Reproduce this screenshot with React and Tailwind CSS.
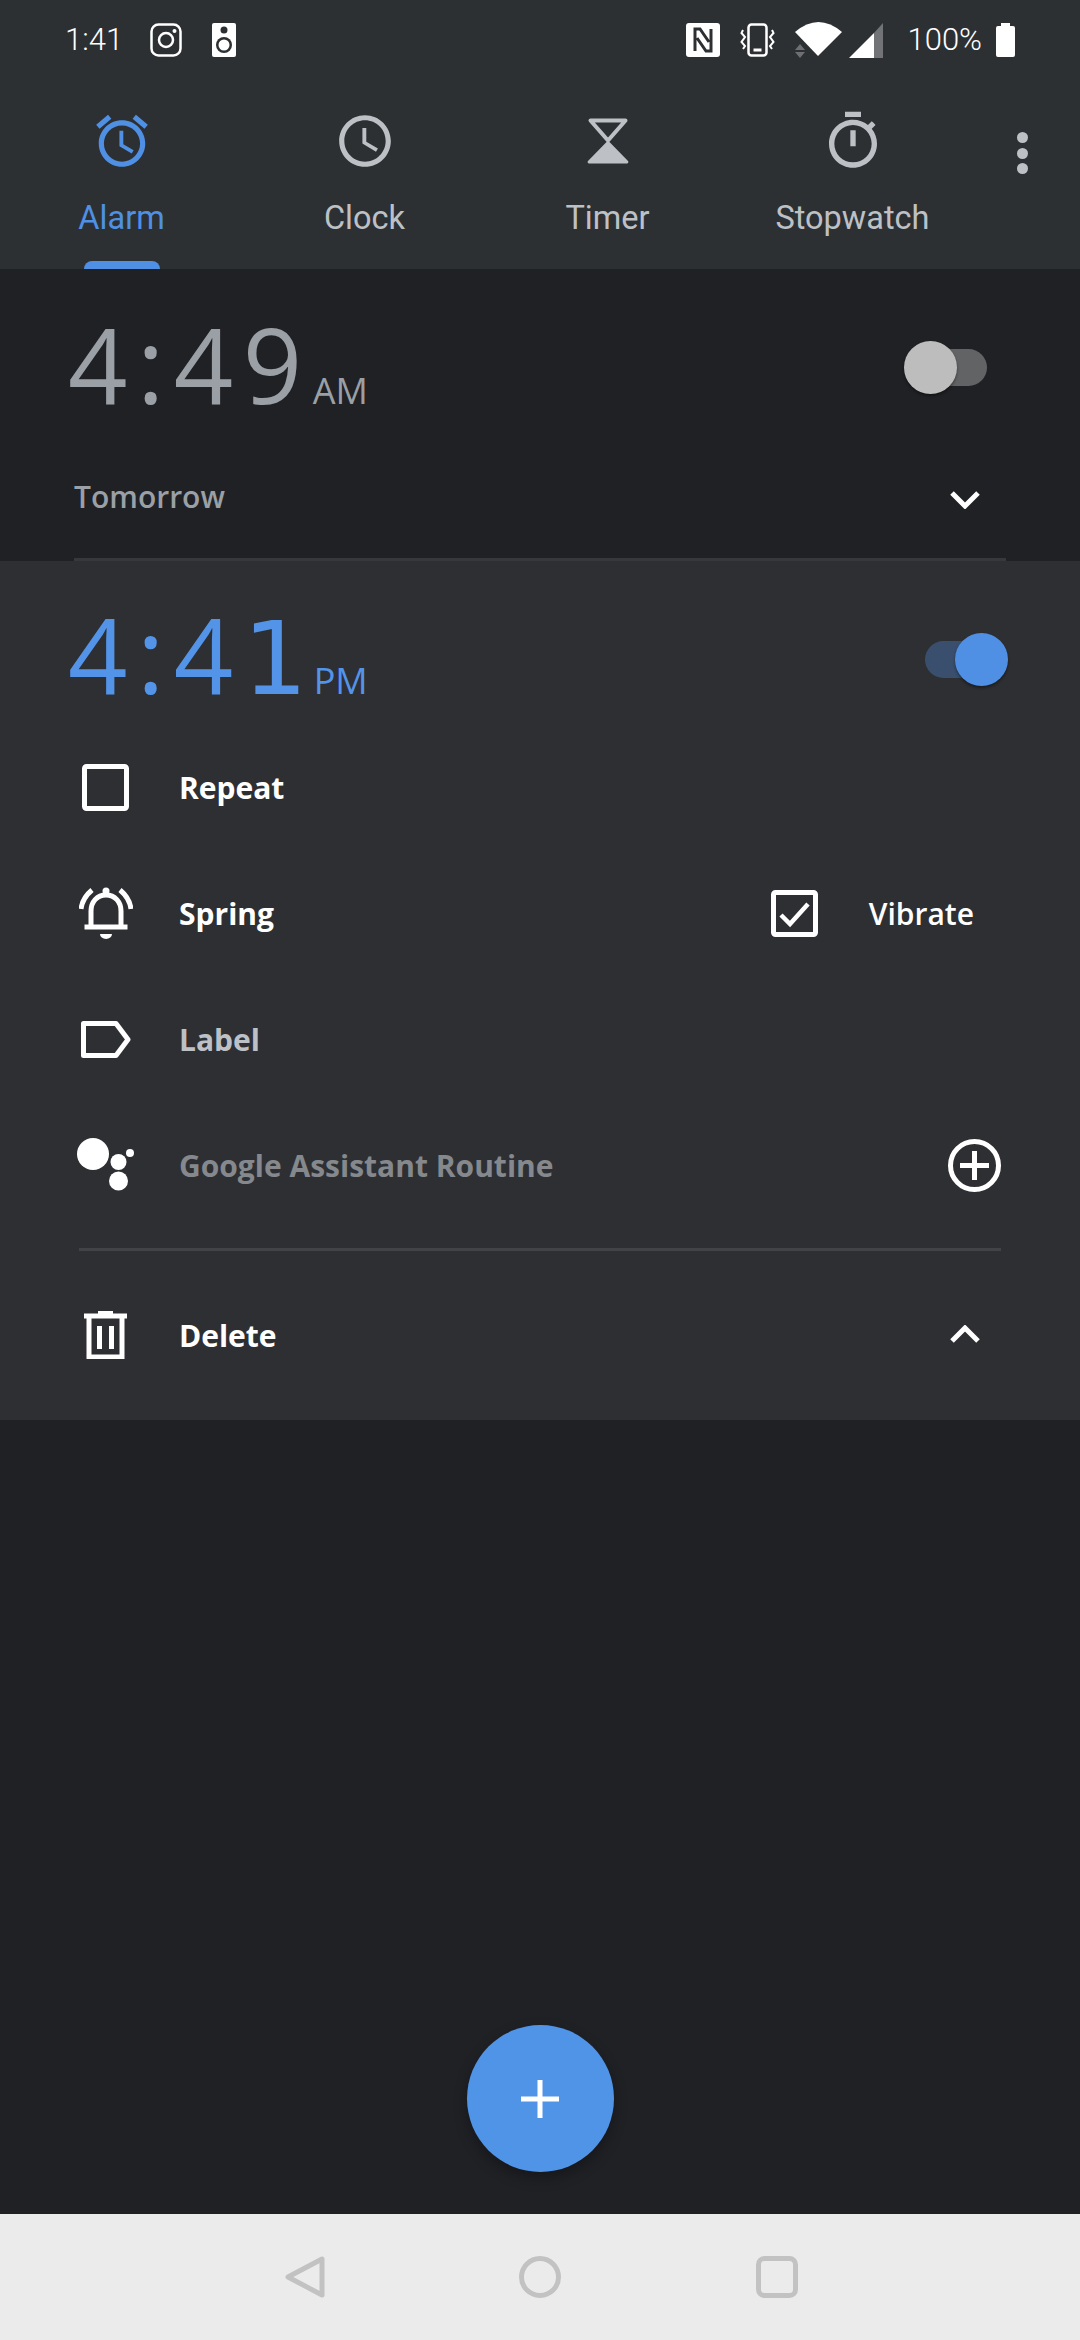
const sans = 'font-["Open_Sans",sans-serif]';

function Instagram() {
  return (
    <svg width="32" height="34" viewBox="0 0 32 34" fill="none" stroke="#fff">
      <rect x="1.500" y="1.500" width="29" height="31" rx="7" strokeWidth="2.500" />
      <circle cx="16" cy="17" r="7" strokeWidth="2.500" />
      <circle cx="24.500" cy="8" r="2" fill="#fff" stroke="none" />
    </svg>
  );
}

function Speaker() {
  return (
    <svg width="24" height="34" viewBox="0 0 24 34">
      <rect width="24" height="34" rx="2" fill="#fff" />
      <circle cx="12" cy="7" r="3.500" fill="#2d3033" />
      <circle cx="12" cy="22" r="8" fill="#2d3033" />
      <circle cx="12" cy="22" r="5.500" fill="#fff" />
    </svg>
  );
}

function Nfc() {
  return (
    <svg width="34" height="34" viewBox="0 0 34 34">
      <rect width="34" height="34" rx="3" fill="#fff" />
      <path d="M9 28V6h5l9 13M25 6v22h-5l-9-13" fill="none" stroke="#2d3033" strokeWidth="3" />
    </svg>
  );
}

function Vibrate() {
  return (
    <svg width="35" height="34" viewBox="0 0 35 34" fill="none" stroke="#fff">
      <rect x="8.500" y="1.500" width="18" height="31" rx="3" strokeWidth="2.500" />
      <path d="M13.500 27h8" strokeWidth="3" />
      <path d="M3 7l-1.500 3 3.500 4-3.500 5 3.500 4-2 3M32 7l1.500 3-3.500 4 3.500 5-3.500 4 2 3" strokeWidth="2" />
    </svg>
  );
}

function Wifi() {
  return (
    <svg width="47" height="36" viewBox="0 0 47 36">
      <path d="M0 10Q23.500 -10 47 10L23 34Z" fill="#fff" />
      <path d="M5 22l5 6H0ZM5 36l5-6H0Z" fill="#6d6f72" />
    </svg>
  );
}

function Signal() {
  return (
    <svg width="34" height="35" viewBox="0 0 34 35">
      <path d="M0 35L25 10V35Z" fill="#fff" />
      <path d="M25 10L34 0V35H25Z" fill="#717376" />
    </svg>
  );
}

function Battery() {
  return (
    <svg width="19" height="34" viewBox="0 0 19 34">
      <path d="M5 0h9v3h3a2 2 0 0 1 2 2v27a2 2 0 0 1-2 2H2a2 2 0 0 1-2-2V5a2 2 0 0 1 2-2h3z" fill="#fff" />
    </svg>
  );
}

function AlarmIcon() {
  return (
    <svg width="62" height="62" viewBox="0 0 24 24" fill="#4f90e4">
      <path d="M22 5.720l-4.600-3.860-1.290 1.530 4.600 3.860L22 5.720zM7.880 3.390L6.600 1.860 2 5.710l1.290 1.530 4.590-3.850zM12.500 8H11v6l4.750 2.850.75-1.230-4-2.370V8zM12 4c-4.970 0-9 4.030-9 9s4.020 9 9 9c4.970 0 9-4.030 9-9s-4.030-9-9-9zm0 16c-3.870 0-7-3.130-7-7s3.130-7 7-7 7 3.130 7 7-3.130 7-7 7z" />
    </svg>
  );
}

function ClockIcon() {
  return (
    <svg width="62" height="62" viewBox="0 0 24 24" fill="#bdc1c6">
      <path d="M11.990 2C6.470 2 2 6.480 2 12s4.470 10 9.990 10C17.520 22 22 17.520 22 12S17.520 2 11.990 2zM12 20c-4.420 0-8-3.580-8-8s3.580-8 8-8 8 3.580 8 8-3.580 8-8 8zm.5-13H11v6l5.250 3.150.75-1.230-4.500-2.670z" />
    </svg>
  );
}

function TimerIcon() {
  return (
    <svg width="42" height="46" viewBox="0 0 42 46" fill="#bdc1c6">
      <path d="M3.500 2.500H38.500L21 22.500Z" fill="none" stroke="#bdc1c6" strokeWidth="4" strokeLinejoin="round" />
      <path d="M21 22.500L41 43a1.500 1.500 0 0 1-1 2.500H2a1.500 1.500 0 0 1-1-2.500Z" />
    </svg>
  );
}

function StopwatchIcon() {
  return (
    <svg width="64" height="64" viewBox="0 0 24 24" fill="#bdc1c6">
      <path d="M15 1H9v2h6V1zm-4 13h2V8h-2v6zm8.030-6.610l1.420-1.420c-.43-.51-.9-.99-1.410-1.410l-1.420 1.420C16.070 4.740 14.120 4 12 4c-4.970 0-9 4.030-9 9s4.020 9 9 9 9-4.030 9-9c0-2.120-.74-4.070-1.970-5.610zM12 20c-3.870 0-7-3.130-7-7s3.130-7 7-7 7 3.130 7 7-3.130 7-7 7z" />
    </svg>
  );
}

function Chevron({ up }) {
  return (
    <svg width="30" height="20" viewBox="0 0 30 20" fill="none" stroke="#fff" strokeWidth="5" className={up ? 'rotate-180' : ''}>
      <path d="M2 4l13 13L28 4" />
    </svg>
  );
}

function BoxIcon({ checked }) {
  return (
    <svg width="47" height="47" viewBox="0 0 47 47" fill="none" stroke="#fff" strokeWidth="5">
      <rect x="2.500" y="2.500" width="42" height="42" rx="2" />
      {checked && <path d="M10 25l9 9 18-20" strokeWidth="4.500" />}
    </svg>
  );
}

function BellIcon() {
  return (
    <svg width="54" height="52" viewBox="0 0 54 52" fill="none" stroke="#fff" strokeWidth="5">
      <path d="M12 40V24C12 15 18 8 27 8s15 7 15 16v16" />
      <path d="M5.500 40h43" />
      <path d="M2 22C3 14 7 8 13 3M52 22C51 14 47 8 41 3" />
      <circle cx="27" cy="4" r="3.500" fill="#fff" stroke="none" />
      <path d="M21 47h12a6 5 0 0 1-12 0Z" fill="#fff" stroke="none" />
    </svg>
  );
}

function LabelIcon() {
  return (
    <svg width="50" height="37" viewBox="0 0 50 37" fill="none" stroke="#fff" strokeWidth="5" strokeLinejoin="round">
      <path d="M2.500 2.500H35L47 18.500L35 34.500H2.500Z" />
    </svg>
  );
}

function AssistantIcon() {
  return (
    <svg width="58" height="54" viewBox="0 0 58 54" fill="#fff">
      <circle cx="16" cy="16" r="16" />
      <circle cx="41.500" cy="24" r="8" />
      <circle cx="41.500" cy="43" r="9.500" />
      <circle cx="53" cy="15" r="4" />
    </svg>
  );
}

function PlusCircle() {
  return (
    <svg width="53" height="53" viewBox="0 0 53 53" fill="none" stroke="#fff" strokeWidth="5">
      <circle cx="26.500" cy="26.500" r="24" />
      <path d="M26.500 12v29M12 26.500h29" />
    </svg>
  );
}

function TrashIcon() {
  return (
    <svg width="43" height="48" viewBox="0 0 43 48" fill="none" stroke="#fff" strokeWidth="5">
      <path d="M0 5h43M14 2h15" />
      <path d="M5 5v41h33V5" />
      <path d="M15.500 15v23M27.500 15v23" />
    </svg>
  );
}

function Toggle({ on }) {
  return (
    <div className="relative h-[53px] w-[104px]">
      <div className={`absolute left-[21px] top-[8px] h-[37px] w-[62px] rounded-full ${on ? 'bg-[#3a4f6e]' : 'bg-[#626365]'}`} />
      <div className={`absolute top-0 size-[53px] rounded-full shadow-[0_2px_3px_rgba(0,0,0,0.4)] ${on ? 'left-[51px] bg-[#4f90e4]' : 'left-0 bg-[#bdbdbd]'}`} />
    </div>
  );
}

function Tab({ icon, label, active, className = '' }) {
  return (
    <div className={`flex w-[243px] flex-col items-center pt-[25px] ${className}`}>
      <div className="flex size-[72px] items-center justify-center">{icon}</div>
      <p className={`mt-[21px] h-[40px] font-['Roboto',sans-serif] text-[32.5px] font-[450] leading-[40px] ${active ? 'text-[#4f90e4]' : 'text-[#bdc1c6]'}`}>{label}</p>
      {active && <div className="mt-[23px] h-[8px] w-[76px] rounded-t-lg bg-[#4f90e4]" />}
    </div>
  );
}

function TimeRow({ time, suffix, on, color }) {
  return (
    <div className="flex h-[106px] items-center justify-between pl-[68px] pr-[72px]">
      <div className={`flex items-baseline pb-[6px] ${color}`}>
        <span className={`${sans} text-[104px] leading-[106px] tracking-[9.500px]`}>{time}</span>
        <span className={`ml-[1px] ${sans} text-[36px] leading-[40px]`}>{suffix}</span>
      </div>
      <Toggle on={on} />
    </div>
  );
}

function Row({ icon, label, color = 'text-white', right }) {
  return (
    <div className="flex h-[126px] items-center pl-[72px] pr-[79px]">
      <div className="mr-[40px] flex w-[67px] justify-center">{icon}</div>
      <span className={`${sans} text-[30px] font-bold ${color}`}>{label}</span>
      <div className="ml-auto flex items-center">{right}</div>
    </div>
  );
}

export default function App() {
  return (
    <div className="flex h-[2340px] w-[1080px] flex-col overflow-hidden bg-[#202125]">
      <header className="h-[269px] shrink-0 bg-[#2d3033]">
        <div className="flex h-[80px] items-center pl-[65px] pr-[65px] font-['Roboto',sans-serif] text-[31px] font-light text-white">
          <span>1:41</span>
          <div className="ml-[27px]"><Instagram /></div>
          <div className="ml-[30px]"><Speaker /></div>
          <div className="ml-auto"><Nfc /></div>
          <div className="ml-[20px]"><Vibrate /></div>
          <div className="ml-[20px]"><Wifi /></div>
          <div className="ml-[7px]"><Signal /></div>
          <span className="ml-[24px]">100%</span>
          <div className="ml-[14px]"><Battery /></div>
        </div>
        <div className="flex">
          <Tab icon={<AlarmIcon />} label="Alarm" active />
          <Tab icon={<ClockIcon />} label="Clock" />
          <Tab icon={<TimerIcon />} label="Timer" />
          <Tab icon={<StopwatchIcon />} label="Stopwatch" className="ml-[2px]" />
          <div className="ml-[43px] flex flex-col gap-[4.500px] pt-[52px]">
            <div className="size-[11px] rounded-full bg-[#bdc1c6]" />
            <div className="size-[11px] rounded-full bg-[#bdc1c6]" />
            <div className="size-[11px] rounded-full bg-[#bdc1c6]" />
          </div>
        </div>
      </header>

      <section className="h-[292px] shrink-0 pt-[45px]">
        <TimeRow time="4:49" suffix="AM" color="text-[#9aa0a6]" />
        <div className="mt-[35px] flex h-[82px] items-center justify-between pl-[74px] pr-[100px]">
          <span className={`${sans} text-[30px] font-semibold text-[#9aa0a6]`}>Tomorrow</span>
          <div className="mt-[6px]"><Chevron /></div>
        </div>
        <div className="ml-[74px] mr-[74px] mt-[21px] h-[3px] bg-[#37383c]" />
      </section>

      <section className="h-[859px] shrink-0 bg-[#2e2f33] pt-[45px]">
        <TimeRow
          time={<>4:4<span className="font-['DejaVu_Sans',sans-serif] text-[102px] tracking-[5px]">1</span></>}
          suffix="PM"
          on
          color="text-[#5394e8]"
        />
        <div className="mt-[12px]">
          <Row icon={<BoxIcon />} label="Repeat" />
          <Row
            icon={<BellIcon />}
            label="Spring"
            right={
              <>
                <BoxIcon checked />
                <span className={`ml-[51px] mr-[27px] ${sans} text-[30px] font-semibold text-white`}>Vibrate</span>
              </>
            }
          />
          <Row icon={<LabelIcon />} label="Label" color="text-[#bdc1c6]" />
          <Row icon={<AssistantIcon />} label="Google Assistant Routine" color="text-[#85888c]" right={<PlusCircle />} />
        </div>
        <div className="ml-[79px] mr-[79px] mt-[20px] h-[3px] bg-[#424347]" />
        <div className="mt-[21px]">
          <Row icon={<TrashIcon />} label="Delete" right={<div className="mr-[21px]"><Chevron up /></div>} />
        </div>
      </section>

      <main className="flex flex-1 items-end justify-center pb-[42px]">
        <div className="flex size-[147px] items-center justify-center rounded-full bg-[#5094e8] shadow-[0_6px_14px_rgba(0,0,0,0.3)]">
          <svg width="38" height="38" viewBox="0 0 38 38" stroke="#fff" strokeWidth="5">
            <path d="M19 0v38M0 19h38" />
          </svg>
        </div>
      </main>

      <nav className="flex h-[126px] shrink-0 items-center bg-[#ebebeb] pl-[285px]">
        <svg width="40" height="42" viewBox="0 0 40 42" fill="none" stroke="#c2c2c2" strokeWidth="5" strokeLinejoin="round">
          <path d="M37 3V39L3 21Z" />
        </svg>
        <svg className="ml-[194px]" width="42" height="42" viewBox="0 0 42 42" fill="none" stroke="#c2c2c2" strokeWidth="5">
          <circle cx="21" cy="21" r="18.500" />
        </svg>
        <svg className="ml-[195px]" width="42" height="42" viewBox="0 0 42 42" fill="none" stroke="#c2c2c2" strokeWidth="5">
          <rect x="2.500" y="2.500" width="37" height="37" rx="6" />
        </svg>
      </nav>
    </div>
  );
}
